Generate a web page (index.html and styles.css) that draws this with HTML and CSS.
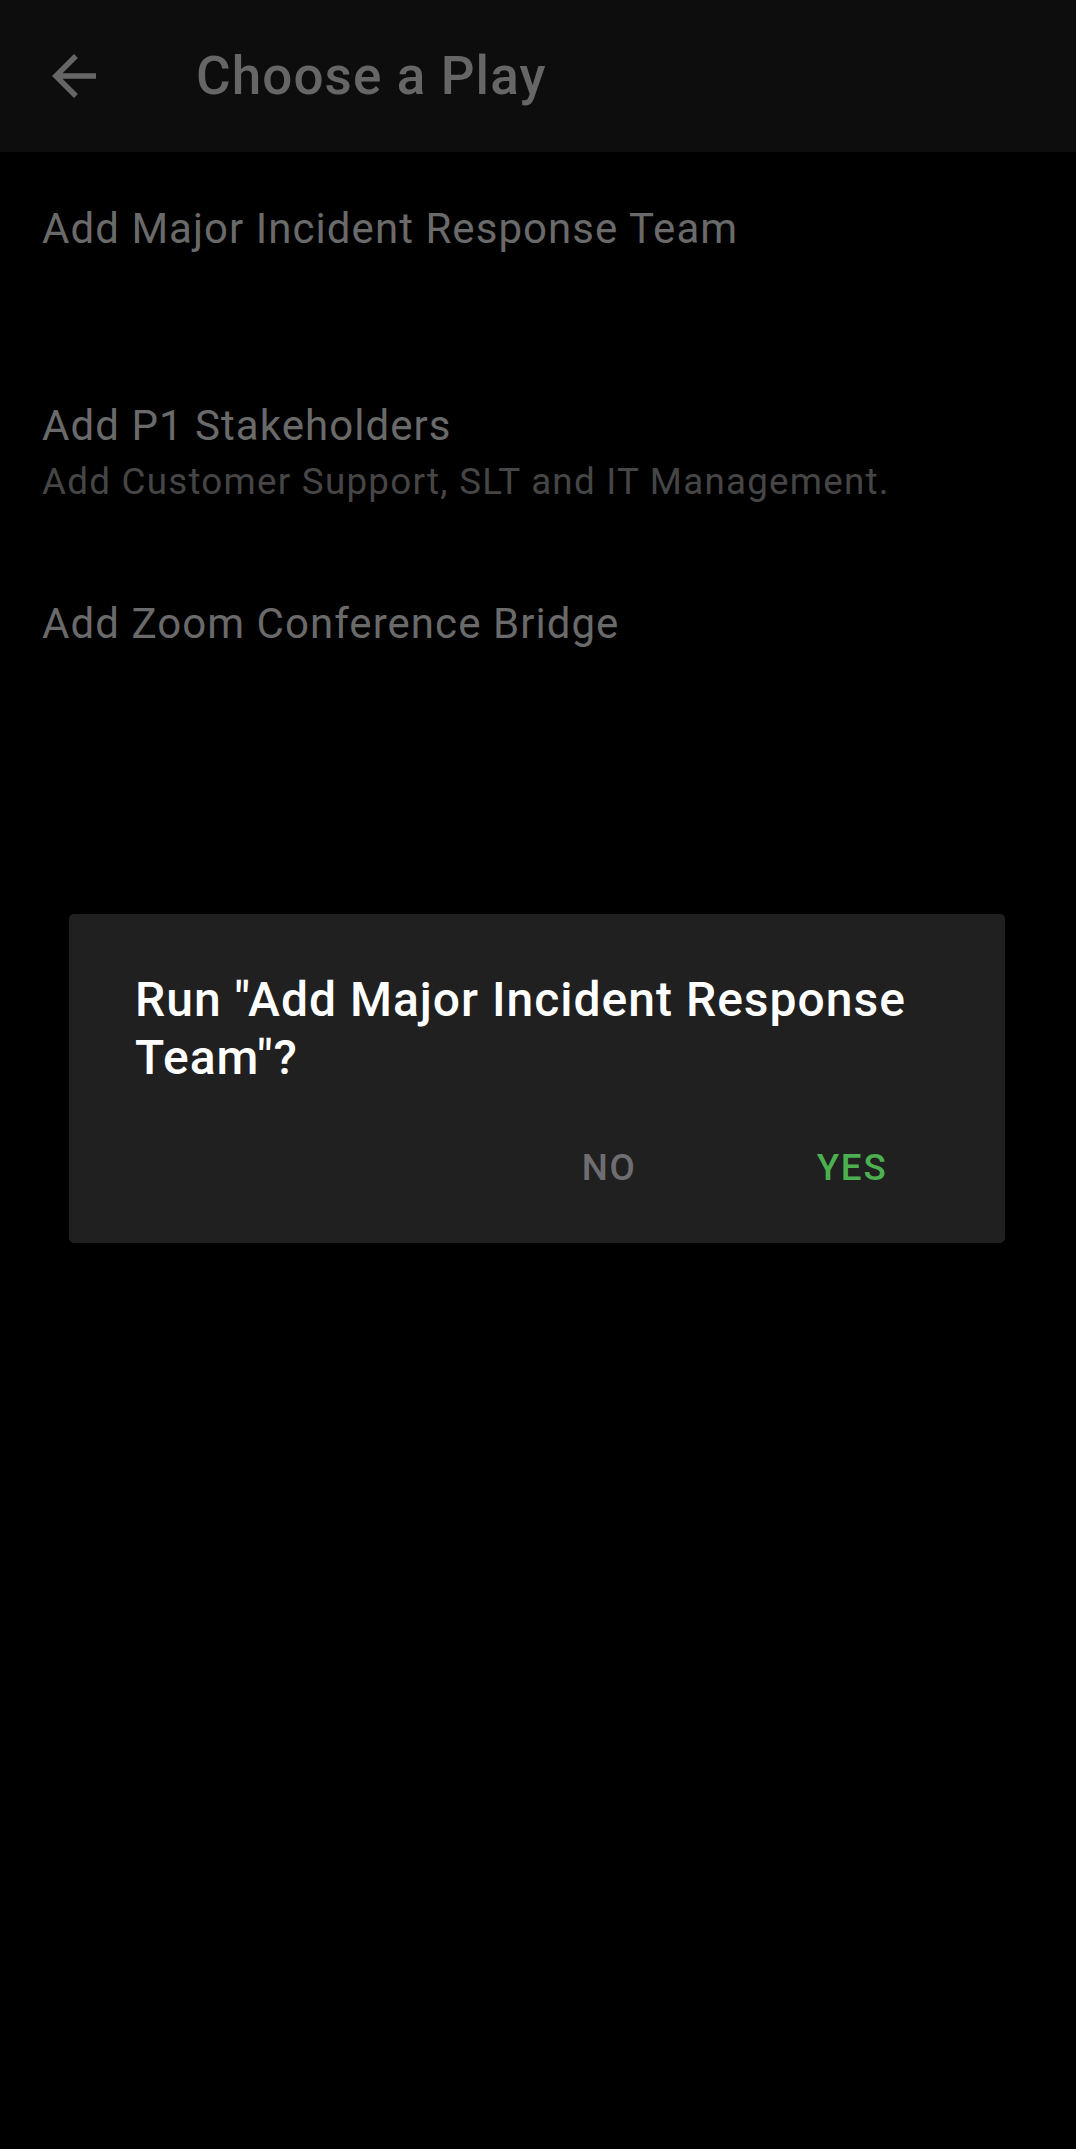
FILE: index.html
```html
<!DOCTYPE html>
<html>
<head>
<meta charset="utf-8">
<link rel="stylesheet" href="styles.css">
</head>
<body>
<div class="screen">
  <header class="toolbar">
    <svg class="back" viewBox="0 0 24 24" width="66" height="66"><path d="M20 11H7.83l5.59-5.59L12 4l-8 8 8 8 1.41-1.41L7.83 13H20v-2z" fill="#666666"/></svg>
    <h1 class="title">Choose a Play</h1>
  </header>
  <ul class="plays">
    <li class="play"><div class="play-title">Add Major Incident Response Team</div><div class="play-sub"></div></li>
    <li class="play"><div class="play-title">Add P1 Stakeholders</div><div class="play-sub">Add Customer Support, SLT and IT Management.</div></li>
    <li class="play"><div class="play-title">Add Zoom Conference Bridge</div><div class="play-sub"></div></li>
  </ul>
  <div class="dialog">
    <div class="dialog-title">Run "Add Major Incident Response Team"?</div>
    <div class="dialog-actions">
      <span class="btn btn-no">NO</span>
      <span class="btn btn-yes">YES</span>
    </div>
  </div>
</div>
</body>
</html>
```
FILE: styles.css
```css
html, body {
  margin: 0;
  padding: 0;
  background: #000;
}
body {
  font-family: Roboto, "Noto Sans", sans-serif;
}
.screen {
  position: relative;
  width: 1076px;
  height: 2149px;
  background: #000;
  overflow: hidden;
}
.toolbar {
  height: 152px;
  background: #0d0d0d;
  display: flex;
  align-items: center;
}
.back {
  margin-left: 41px;
  flex: none;
}
.title {
  margin: 0 0 0 89px;
  font-size: 53px;
  font-weight: 500;
  letter-spacing: 1.1px;
  color: #666666;
  line-height: 60px;
}
.plays {
  list-style: none;
  margin: 0;
  padding: 0;
}
.play {
  height: 197.5px;
  box-sizing: border-box;
  padding: 48.6px 42px 0 42px;
}
.play-title {
  font-size: 42px;
  line-height: 56px;
  letter-spacing: 1.05px;
  color: #6a6a6a;
  height: 56px;
}
.play-sub {
  font-size: 36.75px;
  line-height: 56px;
  letter-spacing: 1.25px;
  color: #464646;
  height: 56px;
}
.dialog {
  position: absolute;
  left: 69px;
  top: 914px;
  width: 936px;
  box-sizing: border-box;
  height: 329px;
  background: #202020;
  border-radius: 5px;
  padding: 56.6px 63px 0 66px;
}
.dialog-title {
  font-size: 48px;
  font-weight: 500;
  line-height: 58px;
  letter-spacing: 1px;
  color: #ffffff;
}
.dialog-actions {
  margin-top: 57.8px;
  display: flex;
  justify-content: flex-end;
  gap: 180px;
  padding-right: 54.5px;
  line-height: 48px;
  font-size: 36.75px;
  font-weight: 500;
  letter-spacing: 1.8px;
}
.btn-no { color: #6e6e72; }
.btn-yes { color: #4caf50; }
```
